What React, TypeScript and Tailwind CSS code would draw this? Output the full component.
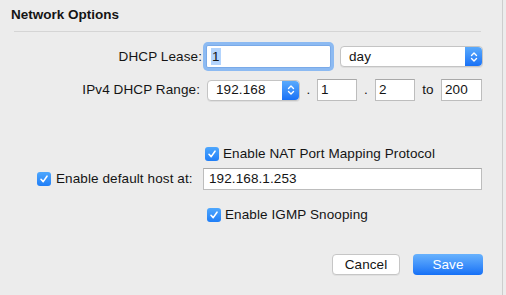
import React from "react";

const Stepper = () => (
  <div className="flex h-full w-[17px] items-center justify-center rounded-r-[4px] bg-gradient-to-b from-[#5aaafc] to-[#1871f6]">
    <svg width="8" height="12" viewBox="0 0 8 12" fill="none">
      <path d="M1.5 4.5 L4 2 L6.5 4.5" stroke="white" strokeWidth="1.4" strokeLinecap="round" strokeLinejoin="round" />
      <path d="M1.5 7.5 L4 10 L6.5 7.5" stroke="white" strokeWidth="1.4" strokeLinecap="round" strokeLinejoin="round" />
    </svg>
  </div>
);

const Select = ({ value, className }: { value: string; className: string }) => (
  <div
    className={`flex h-[21px] items-center justify-between rounded-[4px] border border-[#c4c4c4] bg-white shadow-[0_1px_0_rgba(0,0,0,0.06)] ${className}`}
  >
    <span className="pl-[8px]">{value}</span>
    <Stepper />
  </div>
);

const Field = ({ value, className }: { value: string; className: string }) => (
  <div className={`flex h-[22px] items-center border border-[#bdbdbd] border-t-[#a9a9a9] bg-white pl-[3px] ${className}`}>
    {value}
  </div>
);

const Check = () => (
  <div className="flex h-[14px] w-[14px] shrink-0 items-center justify-center rounded-[3px] bg-gradient-to-b from-[#4ea7fd] to-[#1f7ef7]">
    <svg width="10" height="10" viewBox="0 0 10 10" fill="none">
      <path d="M2 5.3 L4.2 7.6 L8 2.2" stroke="white" strokeWidth="1.6" strokeLinecap="round" strokeLinejoin="round" />
    </svg>
  </div>
);

export default function App() {
  return (
    <div className="flex h-[295px] w-[506px] bg-[#ececec] text-[13.5px] leading-4 tracking-[0.1px] text-[#141414] [font-family:'Liberation_Sans',Arial,sans-serif]">
      <div className="flex w-[503px] flex-col border-r border-[#cdcdcd]">
        <div className="pl-[11px] pt-[7px] font-bold tracking-normal">Network Options</div>
        <div className="ml-[14px] mt-[8px] h-px w-[467px] bg-[#d5d5d5]" />

        {/* DHCP lease */}
        <div className="mt-[13px] flex h-[23px] items-center">
          <div className="w-[202px] whitespace-nowrap text-right">DHCP Lease:</div>
          <div className="ml-[4px] flex h-[23px] w-[125px] items-center rounded-[2px] border border-[#7aaae8] bg-white pl-[4px] shadow-[0_0_0_3px_#8cbaf2]">
            <span className="bg-[#b3d4fd] px-[1px] leading-[17px]">1</span>
          </div>
          <Select value="day" className="ml-[9px] w-[143px]" />
        </div>

        {/* range */}
        <div className="mt-[11px] flex h-[22px] items-center">
          <div className="w-[200px] whitespace-nowrap text-right">IPv4 DHCP Range:</div>
          <Select value="192.168" className="ml-[7px] w-[93px]" />
          <span className="w-[17px] text-center">.</span>
          <Field value="1" className="w-[40px]" />
          <span className="w-[18px] text-center">.</span>
          <Field value="2" className="w-[40px]" />
          <span className="w-[26px] text-center">to</span>
          <Field value="200" className="w-[41px]" />
        </div>

        <div className="mt-[45px] flex h-4 items-center pl-[205px]">
          <Check />
          <span className="ml-[4px] whitespace-nowrap">Enable NAT Port Mapping Protocol</span>
        </div>

        <div className="mt-[6px] flex h-[22px] items-center">
          <div className="flex w-[203px] items-center pl-[37px]">
            <Check />
            <span className="ml-[5px] whitespace-nowrap">Enable default host at:</span>
          </div>
          <Field value="192.168.1.253" className="w-[279px] pl-[5px]" />
        </div>

        <div className="mt-[17px] flex h-4 items-center pl-[207px]">
          <Check />
          <span className="ml-[4px] whitespace-nowrap">Enable IGMP Snooping</span>
        </div>

        <div className="mt-[31px] flex pl-[332px]">
          <button className="h-[21px] w-[68px] rounded-[4px] border border-[#c6c6c6] bg-white shadow-[0_1px_0_rgba(0,0,0,0.05)]">
            Cancel
          </button>
          <button className="ml-[13px] h-[21px] w-[70px] rounded-[4px] bg-gradient-to-b from-[#68b2fd] to-[#1470f6] text-white">
            Save
          </button>
        </div>
      </div>
    </div>
  );
}
